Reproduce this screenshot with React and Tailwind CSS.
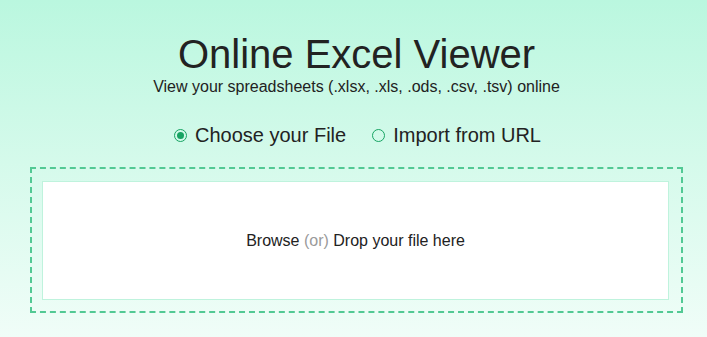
export default function App() {
  return (
    <div
      className="min-h-[337px] w-full bg-gradient-to-b from-[#baf7df] to-[#f0fdf8] text-[#222222]"
      style={{ fontFamily: '"Liberation Sans", Arial, sans-serif' }}
    >
      <div className="ml-[30px] mr-[24px] flex flex-col items-center pt-[34px]">
        <h1 className="text-[40px] leading-[40px] font-normal">Online Excel Viewer</h1>
        <p className="mt-[3px] text-[16px] leading-[20px]">
          View your spreadsheets (.xlsx, .xls, .ods, .csv, .tsv) online
        </p>

        <div className="mt-[24px] ml-[2px] flex items-center gap-[26px] text-[20px] leading-[28px]">
          <label className="flex items-center gap-[8px]">
            <span className="flex h-[13px] w-[13px] items-center justify-center rounded-full border border-[#17a463]">
              <span className="h-[7px] w-[7px] rounded-full bg-[#17a463]" />
            </span>
            Choose your File
          </label>
          <label className="flex items-center gap-[8px]">
            <span className="h-[13px] w-[13px] rounded-full border border-[#17a463]" />
            Import from URL
          </label>
        </div>

        <div className="mt-[18px] w-full border-2 border-dashed border-[#52c994] pl-[10px] pr-[12px] pt-[12px] pb-[11px]">
          <div className="flex h-[119px] items-center justify-center border border-[#bff3dd] bg-white text-[16px]">
            <span>
              Browse <span className="text-[#9a9a9a]">(or)</span> Drop your file here
            </span>
          </div>
        </div>
      </div>
    </div>
  )
}
